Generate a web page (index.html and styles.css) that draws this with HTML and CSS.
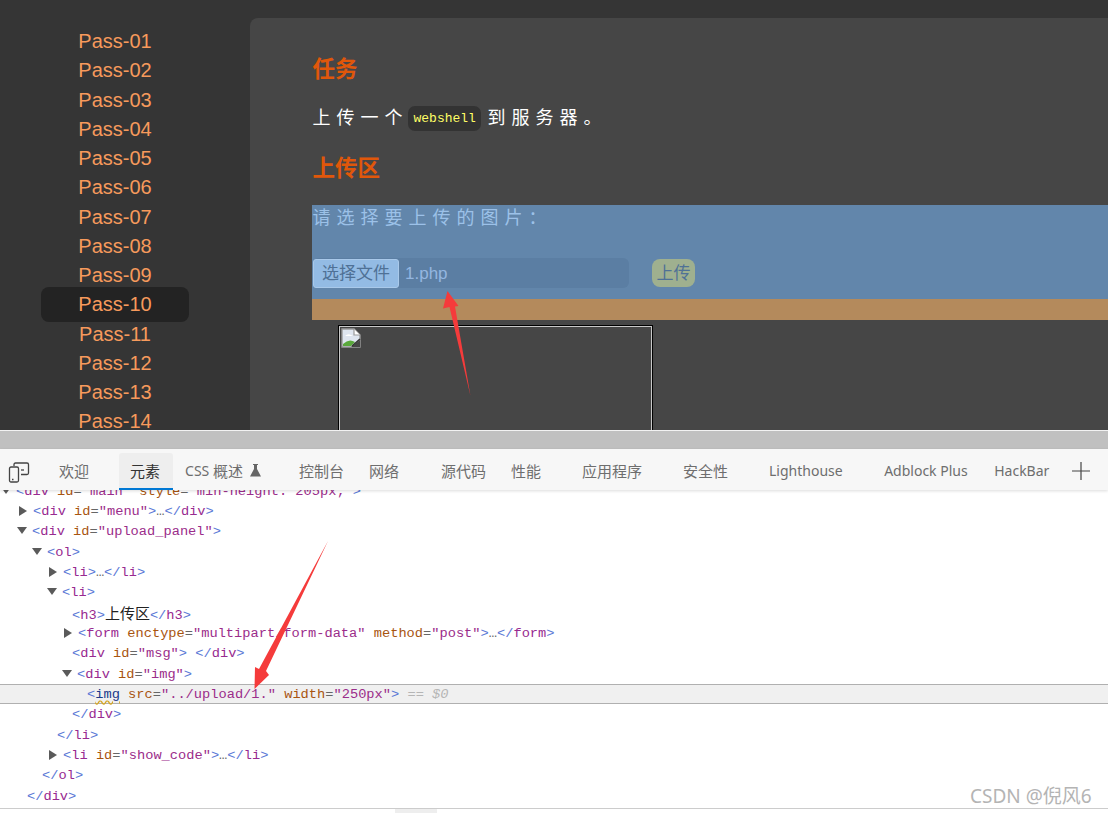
FILE: index.html
```html
<!DOCTYPE html>
<html>
	<head>
		<meta charset="UTF-8">
		<title>upload-labs Pass-10</title>
		<link rel="stylesheet" href="styles.css">
	</head>
	<body>
		<div class="site">
			<ul class="menu">
				<li>Pass-01</li>
				<li>Pass-02</li>
				<li>Pass-03</li>
				<li>Pass-04</li>
				<li>Pass-05</li>
				<li>Pass-06</li>
				<li>Pass-07</li>
				<li>Pass-08</li>
				<li>Pass-09</li>
				<li class="current">Pass-10</li>
				<li>Pass-11</li>
				<li>Pass-12</li>
				<li>Pass-13</li>
				<li>Pass-14</li>
			</ul>
			<div class="panel">
				<h3>任务</h3>
				<p class="task">上传一个<code>webshell</code>到服务器。</p>
				<h3 class="second">上传区</h3>
				<div class="upload">
					<p class="pick">请选择要上传的图片：</p>
					<div class="file-row">
						<div class="file-field">
							<span class="file-btn">选择文件</span>
							<span class="file-name">1.php</span>
						</div>
						<span class="submit">上传</span>
					</div>
				</div>
				<div class="msg"></div>
				<div class="img-box">
					<svg class="broken" width="20" height="20" viewBox="0 0 20 20">
						<path d="M1 1H13L19 7V19H1Z" fill="#dfe6f0" stroke="#9a9a9a" stroke-width="1.4"/>
						<path d="M13 1V7H19" fill="#fff" stroke="#9a9a9a" stroke-width="1.2"/>
						<path d="M4 8q3-3 6-1l2 1H4Z" fill="#fff"/>
						<path d="M2 18V16Q8 10 14 14L10 18Z" fill="#5aa83c"/>
						<path d="M10 19L19 12V19Z" fill="#464646"/>
						<path d="M11 18L19 11" stroke="#333" stroke-width="1.6"/>
					</svg>
				</div>
			</div>
		</div>
		<div class="split"></div>
		<div class="tabs">
			<svg class="device" width="22" height="22" viewBox="0 0 22 22" fill="none" stroke="#444" stroke-width="1.3">
				<path d="M6 5V3.5Q6 2 7.500 2H19Q20.500 2 20.500 3.500V12Q20.500 13.500 19 13.500H13"/>
				<rect x="1.500" y="6" width="9" height="15" rx="1.500"/>
				<path d="M13 9H16"/>
				<path d="M4 18.500H5.500"/>
			</svg>
			<span class="tab wide">欢迎</span>
			<span class="tab active">元素</span>
			<span class="tab wide css"><span class="lat">CSS&nbsp;</span>概述
				<svg class="flask" width="11" height="13" viewBox="0 0 11 13"><path d="M3 0H8V1H7V5L11 12.500H0L4 5V1H3Z" fill="#666"/></svg>
			</span>
			<span class="tab">控制台</span>
			<span class="tab wide net">网络</span>
			<span class="tab">源代码</span>
			<span class="tab wide">性能</span>
			<span class="tab wide">应用程序</span>
			<span class="tab wide">安全性</span>
			<span class="tab wide lat light">Lighthouse</span>
			<span class="tab lat abp">Adblock Plus</span>
			<span class="tab lat">HackBar</span>
			<svg class="plus" width="18" height="18" viewBox="0 0 18 18"><path d="M0 9H18M9 0V18" stroke="#444" stroke-width="1.2"/></svg>
		</div>
		<div class="code">
			<div class="code-in">
				<div class="line open i17"><b>&lt;</b><i>div</i> <u>id</u>=<s>"main"</s> <u>style</u>=<s>"min-height: 205px;"</s><b>&gt;</b></div>
				<div class="line closed i33"><b>&lt;</b><i>div</i> <u>id</u>=<s>"menu"</s><b>&gt;</b>…<b>&lt;/</b><i>div</i><b>&gt;</b></div>
				<div class="line open i33"><b>&lt;</b><i>div</i> <u>id</u>=<s>"upload_panel"</s><b>&gt;</b></div>
				<div class="line open i48"><b>&lt;</b><i>ol</i><b>&gt;</b></div>
				<div class="line closed i63"><b>&lt;</b><i>li</i><b>&gt;</b>…<b>&lt;/</b><i>li</i><b>&gt;</b></div>
				<div class="line open i63"><b>&lt;</b><i>li</i><b>&gt;</b></div>
				<div class="line i72"><b>&lt;</b><i>h3</i><b>&gt;</b><span class="cjk">上传区</span><b>&lt;/</b><i>h3</i><b>&gt;</b></div>
				<div class="line closed i78"><b>&lt;</b><i>form</i> <u>enctype</u>=<s>"multipart/form-data"</s> <u>method</u>=<s>"post"</s><b>&gt;</b>…<b>&lt;/</b><i>form</i><b>&gt;</b></div>
				<div class="line i72"><b>&lt;</b><i>div</i> <u>id</u>=<s>"msg"</s><b>&gt;</b> <b>&lt;/</b><i>div</i><b>&gt;</b></div>
				<div class="line open i78"><b>&lt;</b><i>div</i> <u>id</u>=<s>"img"</s><b>&gt;</b></div>
				<div class="line selected i87"><b>&lt;</b><em>img</em> <u>src</u>=<s>"../upload/1."</s> <u>width</u>=<s>"250px"</s><b>&gt;</b> <span class="dollar">== $0</span></div>
				<div class="line i72"><b>&lt;/</b><i>div</i><b>&gt;</b></div>
				<div class="line i57"><b>&lt;/</b><i>li</i><b>&gt;</b></div>
				<div class="line closed i63"><b>&lt;</b><i>li</i> <u>id</u>=<s>"show_code"</s><b>&gt;</b>…<b>&lt;/</b><i>li</i><b>&gt;</b></div>
				<div class="line i42"><b>&lt;/</b><i>ol</i><b>&gt;</b></div>
				<div class="line i27"><b>&lt;/</b><i>div</i><b>&gt;</b></div>
			</div>
		</div>
		<div class="hscroll"><span class="thumb"></span></div>

		<div class="mark">CSDN @倪风6</div>
		<svg class="arrows" width="1108" height="814" viewBox="0 0 1108 814">
			<polygon points="447.500,291 458.500,306 455,306.500 470.500,396 449.500,307 443,308.500" fill="#f53b3b"/>
			<polygon points="328,541 266,671 269,675 254.500,689 255,667 259,669" fill="#f53b3b"/>
		</svg>
	</body>
</html>
```

FILE: styles.css
```css
body{
margin: 0;
width: 1108px;
height: 814px;
overflow: hidden;
background: #fff;
font-family: "Liberation Sans", "Noto Sans CJK SC", sans-serif;
}
/* page under inspection */
.site{
display: flex;
height: 412px;
padding-top: 18px;
overflow: hidden;
background: #353535;
}
.menu{
width: 148px;
margin: 0;
padding: 9px 61px 0 41px;
flex: none;
list-style: none;
}
.menu li{
height: 29.250px;
line-height: 29.250px;
text-align: center;
font-size: 20px;
color: #f79a5c;
}
.menu .current{
height: 35px;
line-height: 35px;
margin: -3px 0 -2.750px;
border-radius: 8px;
background: #232323;
}
.panel{
flex: 1;
min-width: 0;
padding: 39px 0 0 62px;
border-radius: 8px 0 0 0;
background: #464646;
}
h3{
margin: 0 0 0 0.500px;
height: 26px;
line-height: 26px;
font-size: 22.500px;
font-weight: bold;
color: #e0570a;
}
.second{
margin-top: 25px;
}
.task{
display: flex;
align-items: center;
margin: 18px 0 0 0.500px;
height: 30px;
font-size: 18px;
letter-spacing: 6px;
color: #fff;
}
code{
margin: 4px 6px 0 -0.500px;
padding: 0 5.500px;
height: 25px;
line-height: 25px;
border-radius: 7px;
background: #333;
font-family: "Liberation Mono", monospace;
font-size: 13px;
letter-spacing: 0;
color: #ffff66;
}
.upload{
height: 94px;
margin-top: 23px;
border-bottom: 21px solid #b48a5c;
background: #6286ab;
overflow: hidden;
}
.pick{
margin: 1px 0 0 0.500px;
height: 24px;
line-height: 24px;
font-size: 18px;
letter-spacing: 6px;
color: #9cc1e8;
}
.file-row{
display: flex;
align-items: center;
margin-top: 28px;
padding-left: 1px;
font-size: 17px;
}
.file-field{
display: flex;
align-items: center;
width: 316px;
height: 30px;
border-radius: 6px;
background: #5b7ea3;
}
.file-btn{
width: 84px;
height: 27px;
line-height: 27px;
text-align: center;
border: 1px solid #a9c9ea;
border-radius: 3px;
background: #93bbe4;
color: #4f7196;
}
.file-name{
margin: 2px 0 0 6px;
color: #94b6e0;
}
.submit{
width: 43px;
height: 28px;
line-height: 30px;
margin-left: 23px;
text-align: center;
border-radius: 8px;
background: #9fb08f;
color: #4f7196;
}
.msg{
height: 5px;
}
.img-box{
position: relative;
width: 313px;
height: 200px;
margin-left: 26px;
border: 1px solid #000;
box-shadow: inset 0 0 0 1px #c8c8c8;
}
.broken{
position: absolute;
left: 2px;
top: 2px;
}
/* devtools */
.split{
height: 18px;
border-top: 1px solid #f2f2f2;
background: #c0c0c0;
}
.tabs{
position: relative;
z-index: 1;
display: flex;
align-items: stretch;
gap: 3px;
height: 41px;
padding-left: 48px;
background: #f7f7f7;
box-shadow: 0 1px 3px rgba(0,0,0,.14);
font-size: 15px;
font-family: "Noto Sans", "Noto Sans CJK SC", sans-serif;
color: #6e6e6e;
}
.lat{
font-size: 14px;
}
.device{
position: absolute;
left: 8px;
top: 12px;
}
.tab{
display: flex;
align-items: center;
padding: 2px 11px 0;
white-space: nowrap;
}
.tab.wide{
margin-right: 16px;
}
.tab.css{
margin-right: 13px;
}
.tab.net{
margin-right: 17px;
}
.tab.light{
margin-right: 16.500px;
}
.tab.abp{
margin-right: 1.500px;
}
.flask{
margin-left: 7px;
}
.tab.active{
margin: 4px -2px 0 0;
padding: 0 13px 0 11px;
box-sizing: border-box;
border-bottom: 2px solid #0078d4;
border-radius: 3px 3px 0 0;
background: #eee;
color: #333;
}
.plus{
margin: 13px 0 0 9px;
}
.code{
height: 318px;
overflow: hidden;
border-bottom: 1px solid #ccc;
}
.code-in{
margin-top: -9.500px;
}
.line{
box-sizing: border-box;
height: 20.350px;
padding-top: 2px;
line-height: 18.350px;
font-family: "Liberation Mono", monospace;
font-size: 13.700px;
white-space: pre;
color: #666;
}
.line b,
.line i,
.line u,
.line s,
.line em{
font-weight: normal;
font-style: normal;
text-decoration: none;
}
.line b{
color: #5a78d6;
}
.line i{
color: #982a90;
}
.line u{
color: #a85510;
}
.line s{
color: #9b2d8a;
}
.line em{
color: #1a3a8a;
text-decoration: underline wavy #d6a520;
text-underline-offset: 2px;
}
.cjk{
font-family: "Noto Sans CJK SC", sans-serif;
font-size: 15px;
line-height: 1;
color: #222;
}
.selected{
padding-top: 1px;
border-top: 1px solid #b0b0b0;
border-bottom: 1px solid #b0b0b0;
background: #f0f0f0;
}
.dollar{
font-style: italic;
color: #b5b5b5;
}
.open:before,
.closed:before{
content: "";
display: inline-block;
width: 0;
height: 0;
vertical-align: 1px;
}
.open:before{
margin-left: -16px;
margin-right: 5px;
border-style: solid;
border-width: 7px 5.500px 0;
border-color: #5a5a5a transparent transparent;
}
.closed:before{
margin-left: -14px;
margin-right: 6px;
border-style: solid;
border-width: 5.500px 0 5.500px 8px;
border-color: transparent transparent transparent #5a5a5a;
vertical-align: -1px;
}
.i17{padding-left: 17px;}
.i27{padding-left: 27px;}
.i33{padding-left: 33px;}
.i42{padding-left: 42px;}
.i48{padding-left: 48px;}
.i57{padding-left: 57px;}
.i63{padding-left: 63px;}
.i72{padding-left: 72px;}
.i78{padding-left: 78px;}
.i87{padding-left: 87px;}
.hscroll{
height: 4px;
}
.thumb{
display: block;
width: 42px;
height: 4px;
margin-left: 395px;
background: #eee;
}
/* overlays added on the screenshot */
.mark{
position: absolute;
left: 970px;
top: 784px;
font-family: "Noto Sans", "Noto Sans CJK SC", sans-serif;
font-size: 19px;
line-height: 25px;
white-space: nowrap;
color: #b4b4b4;
}
.arrows{
position: absolute;
left: 0;
top: 0;
pointer-events: none;
}
```
